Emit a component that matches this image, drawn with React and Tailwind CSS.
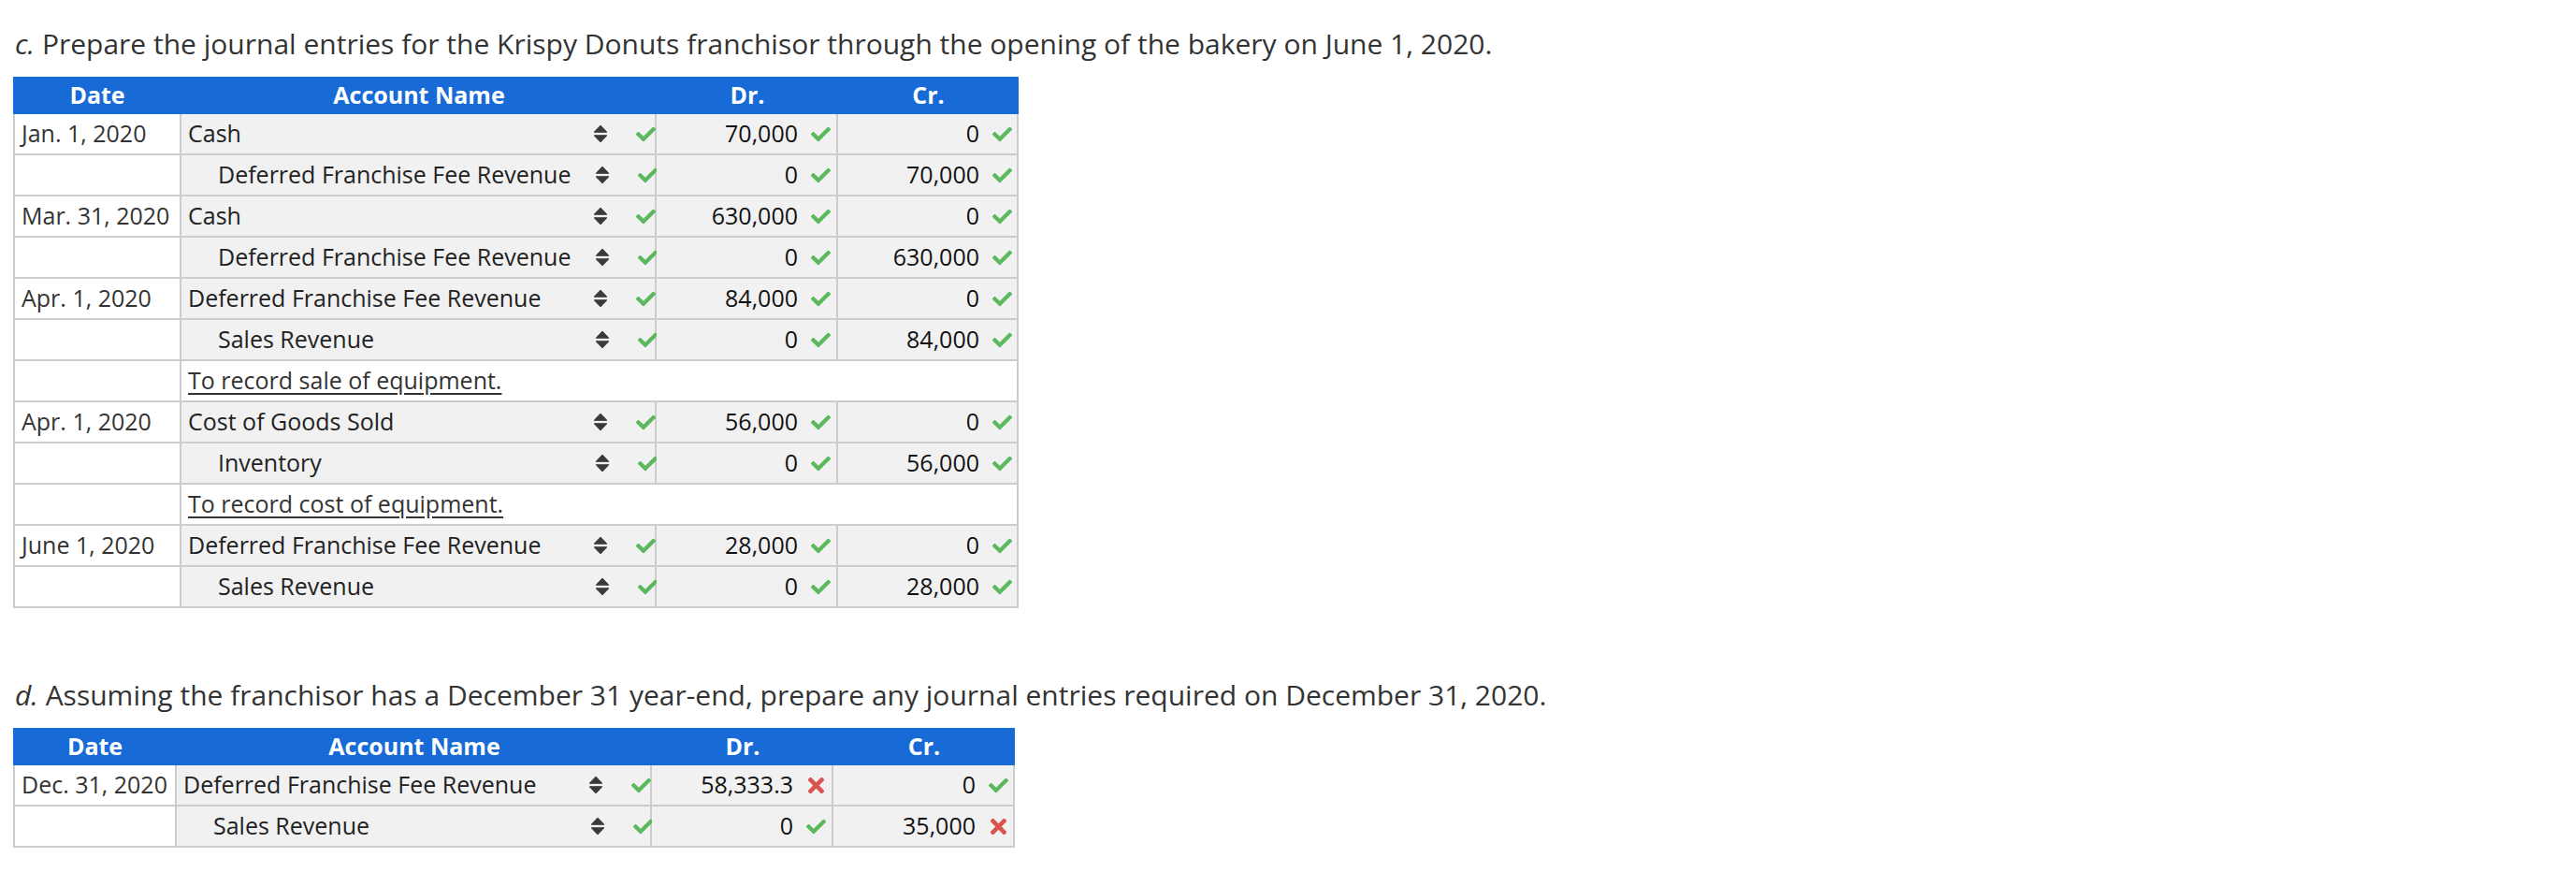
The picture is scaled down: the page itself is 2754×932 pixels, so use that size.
import { FaCheck, FaTimes } from "react-icons/fa";

const rowsC = [
  { date: "Jan. 1, 2020", account: "Cash", dr: "70,000", cr: "0" },
  { account: "Deferred Franchise Fee Revenue", indent: true, dr: "0", cr: "70,000" },
  { date: "Mar. 31, 2020", account: "Cash", dr: "630,000", cr: "0" },
  { account: "Deferred Franchise Fee Revenue", indent: true, dr: "0", cr: "630,000" },
  { date: "Apr. 1, 2020", account: "Deferred Franchise Fee Revenue", dr: "84,000", cr: "0" },
  { account: "Sales Revenue", indent: true, dr: "0", cr: "84,000" },
  { memo: "To record sale of equipment." },
  { date: "Apr. 1, 2020", account: "Cost of Goods Sold", dr: "56,000", cr: "0" },
  { account: "Inventory", indent: true, dr: "0", cr: "56,000" },
  { memo: "To record cost of equipment." },
  { date: "June 1, 2020", account: "Deferred Franchise Fee Revenue", dr: "28,000", cr: "0" },
  { account: "Sales Revenue", indent: true, dr: "0", cr: "28,000" },
];

const rowsD = [
  { date: "Dec. 31, 2020", account: "Deferred Franchise Fee Revenue", dr: "58,333.3", drBad: true, cr: "0" },
  { account: "Sales Revenue", indent: true, dr: "0", cr: "35,000", crBad: true },
];

function Sort() {
  return (
    <svg width="16" height="20" viewBox="0 0 16 20" className="shrink-0">
      <path d="M1.5 8.2 L8 1.5 L14.5 8.2 Z" fill="#3a3a3a" stroke="#3a3a3a" strokeWidth="1.2" strokeLinejoin="round" />
      <path d="M1.5 11.8 L8 18.5 L14.5 11.8 Z" fill="#3a3a3a" stroke="#3a3a3a" strokeWidth="1.2" strokeLinejoin="round" />
    </svg>
  );
}

function Mark({ bad }) {
  return (
    <span className="w-[21px] flex justify-center items-center shrink-0">
      {bad ? <FaTimes size={25} color="#d9534f" /> : <FaCheck size={21} color="#5cb85c" />}
    </span>
  );
}

function Journal({ rows, cols }) {
  return (
    <div className="w-fit text-[25px]">
      <div className={`grid ${cols} h-[40px] bg-[#186bd6] text-white font-bold`}>
        <div className="flex items-center justify-center">Date</div>
        <div className="flex items-center justify-center">Account Name</div>
        <div className="flex items-center justify-center">Dr.</div>
        <div className="flex items-center justify-center">Cr.</div>
      </div>
      {rows.map((r, i) => (
        <div key={i} className={`grid ${cols} h-[44px] border-b-2 border-[#cccccc]`}>
          <div className="border-x-2 border-[#cccccc] bg-white flex items-center pl-[7px] text-[#333333] whitespace-nowrap">
            {r.date}
          </div>
          {r.memo ? (
            <div className="col-span-3 border-r-2 border-[#cccccc] bg-white flex items-center pl-[7px] text-[#333333] underline underline-offset-[4px]">
              {r.memo}
            </div>
          ) : (
            <>
              <div className="border-r-2 border-[#cccccc] bg-[#f1f1f1] flex items-center text-[#222222]">
                <span className={r.indent ? "flex-1 pl-[39px] whitespace-nowrap" : "flex-1 pl-[7px] whitespace-nowrap"}>{r.account}</span>
                <span className={r.indent ? "flex items-center gap-[30px] mr-[-3px]" : "flex items-center gap-[30px] mr-[-1px]"}>
                  <Sort />
                  <Mark />
                </span>
              </div>
              <div className="border-r-2 border-[#cccccc] bg-[#f1f1f1] flex items-center justify-end gap-[14px] pr-[6px] text-[#111111]">
                <span>{r.dr}</span>
                <Mark bad={r.drBad} />
              </div>
              <div className="border-r-2 border-[#cccccc] bg-[#f1f1f1] flex items-center justify-end gap-[14px] pr-[5px] text-[#111111]">
                <span>{r.cr}</span>
                <Mark bad={r.crBad} />
              </div>
            </>
          )}
        </div>
      ))}
    </div>
  );
}

export default function App() {
  return (
    <div className="min-h-[932px] bg-white pl-[14px] pt-[27px] font-['Open_Sans',sans-serif]">
      <p className="text-[30px] leading-[40px] text-[#333333] pl-[2px]">
        <i>c.</i> Prepare the journal entries for the Krispy Donuts franchisor through the opening of the bakery on June 1, 2020.
      </p>
      <div className="mt-[15px]">
        <Journal rows={rowsC} cols="grid-cols-[180px_508px_194px_193px]" />
      </div>
      <p className="mt-[73px] text-[30px] leading-[40px] text-[#333333] pl-[2px]">
        <i>d.</i> Assuming the franchisor has a December 31 year-end, prepare any journal entries required on December 31, 2020.
      </p>
      <div className="mt-[15px]">
        <Journal rows={rowsD} cols="grid-cols-[175px_508px_194px_194px]" />
      </div>
    </div>
  );
}
